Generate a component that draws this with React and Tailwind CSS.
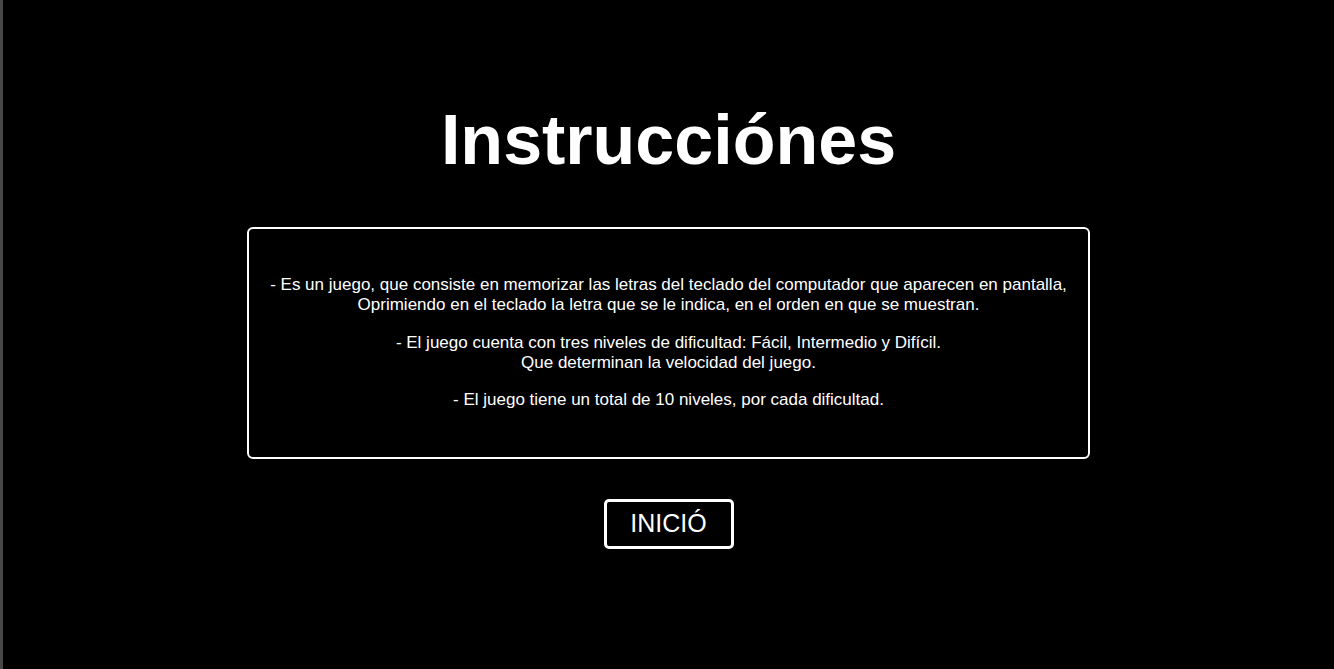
export default function App() {
  return (
    <div className="flex h-[669px] w-full bg-black" style={{ fontFamily: '"Liberation Sans", Arial, sans-serif' }}>
      <div className="w-[3px] shrink-0 bg-[#474747]" />
      <div className="flex flex-1 flex-col items-center text-white">
        <h1 className="mt-[97px] text-[70px] font-bold leading-[86px]">Instrucciónes</h1>
        <div className="mt-[44px] w-[843px] rounded-[6px] border-2 border-white px-4 pt-[46px] pb-[47px] text-center text-[17px] leading-[20px]">
          <p>
            - Es un juego, que consiste en memorizar las letras del teclado del computador que aparecen en pantalla,
            <br />
            Oprimiendo en el teclado la letra que se le indica, en el orden en que se muestran.
          </p>
          <p className="mt-[18px]">
            - El juego cuenta con tres niveles de dificultad: Fácil, Intermedio y Difícil.
            <br />
            Que determinan la velocidad del juego.
          </p>
          <p className="mt-[17px]">- El juego tiene un total de 10 niveles, por cada dificultad.</p>
        </div>
        <button className="mt-[40px] flex h-[50px] w-[130px] items-center justify-center rounded-[5px] border-[3px] border-white text-[25px] text-white">
          INICIÓ
        </button>
      </div>
    </div>
  );
}
